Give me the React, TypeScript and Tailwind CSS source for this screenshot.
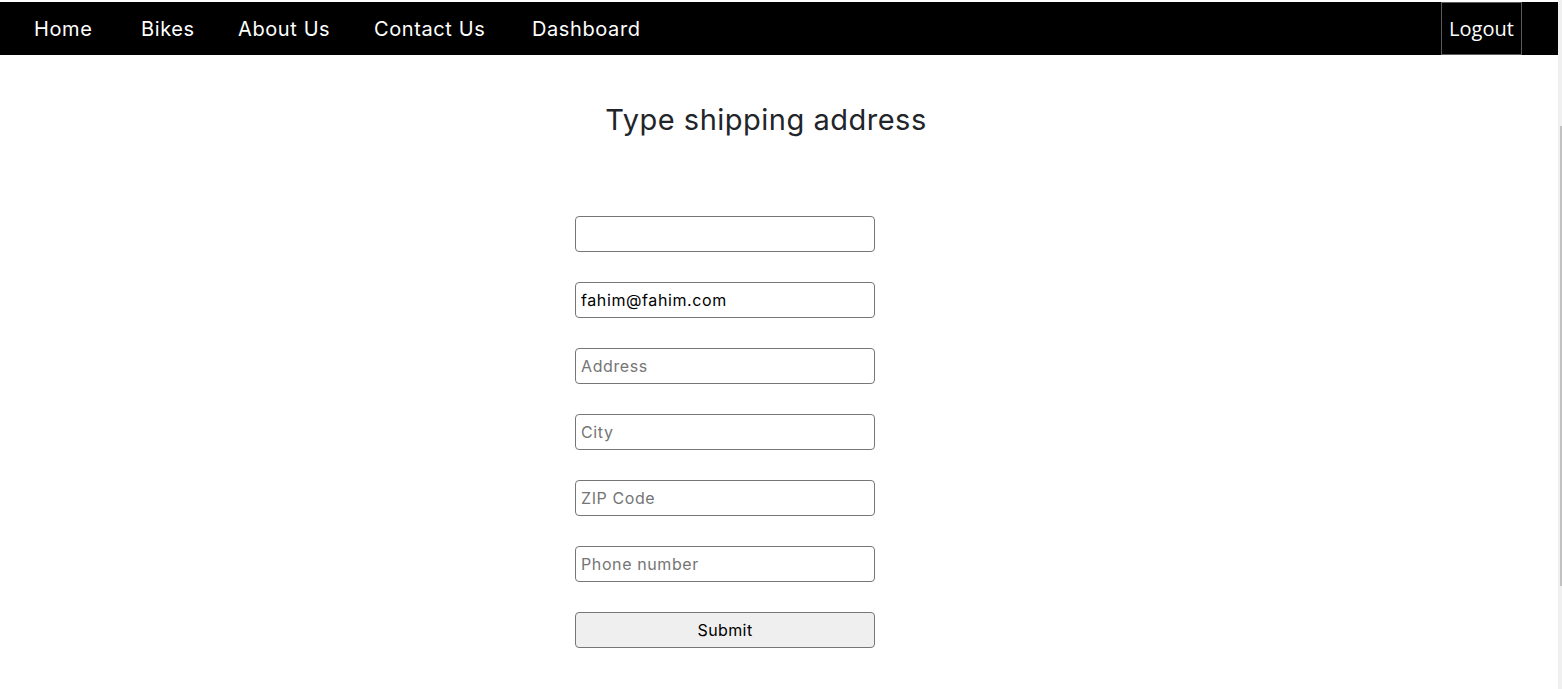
import React from 'react';

const links = [
  { label: 'Home', w: 'w-[107px]' },
  { label: 'Bikes', w: 'w-[97px]' },
  { label: 'About Us', w: 'w-[136px]' },
  { label: 'Contact Us', w: 'w-[158px]' },
  { label: 'Dashboard', w: '' },
];

const fields = [
  { placeholder: '', value: '' },
  { placeholder: '', value: 'fahim@fahim.com' },
  { placeholder: 'Address', value: '' },
  { placeholder: 'City', value: '' },
  { placeholder: 'ZIP Code', value: '' },
  { placeholder: 'Phone number', value: '' },
];

const App: React.FC = () => {
  return (
    <div className="flex min-h-[689px] bg-white font-['Inter',sans-serif]">
      <div className="flex-1 pt-[2px]">
        <nav className="h-[53px] bg-black flex items-center justify-between">
          <ul className="flex items-center pl-[34px]">
            {links.map((l) => (
              <li key={l.label} className={`${l.w} text-white text-[20px] tracking-[0.6px] cursor-pointer`}>
                {l.label}
              </li>
            ))}
          </ul>
          <button className="h-[53px] w-[81px] mr-[36px] border border-[#5a5a5a] bg-black text-white text-[20px] font-['Open_Sans',sans-serif]">
            Logout
          </button>
        </nav>

        <h2 className="text-center text-[29px] tracking-[0.5px] text-[#212529] mt-[43px] pr-[26px]">
          Type shipping address
        </h2>

        <form className="mt-[74px] flex flex-col items-start pl-[575px] gap-[30px]">
          {fields.map((f, i) => (
            <input
              key={i}
              type="text"
              defaultValue={f.value}
              placeholder={f.placeholder}
              className="w-[300px] h-[36px] rounded-[4px] border border-[#767676] px-[5px] text-[16px] tracking-[0.6px] text-black placeholder:text-[#757575] outline-none"
            />
          ))}
          <button
            type="button"
            className="w-[300px] h-[36px] rounded-[4px] border border-[#767676] bg-[#efefef] text-[16px] tracking-[0.4px] text-black"
          >
            Submit
          </button>
        </form>
      </div>

      {/* scrollbar strip */}
      <div className="w-[4px] bg-[#f0f0f0] pt-[126px]">
        <div className="ml-[2px] w-[2px] h-[460px] bg-[#c1c1c1]" />
      </div>
    </div>
  );
};

export default App;
